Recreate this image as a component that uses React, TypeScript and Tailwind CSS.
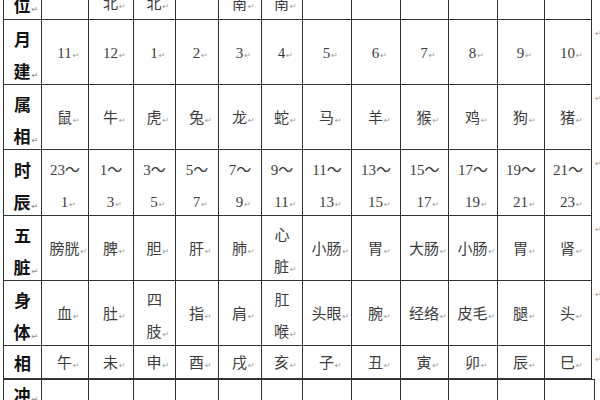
import React from 'react';
import clsx from 'clsx';

type Row = {
  label: string[];
  labelMark?: boolean;
  height: string;
  cells: string[][];
};

// the 方位 row is cut by the top edge: only its last line shows
const topLabel = '位';
const topCells = ['', '北', '北', '', '南', '南', '', '', '', '', '', ''];

const rows: Row[] = [
  {
    label: ['月', '建'],
    labelMark: true,
    height: 'h-[65px]',
    cells: ['11', '12', '1', '2', '3', '4', '5', '6', '7', '8', '9', '10'].map((v) => [v]),
  },
  {
    label: ['属', '相'],
    labelMark: true,
    height: 'h-[65px]',
    cells: ['鼠', '牛', '虎', '兔', '龙', '蛇', '马', '羊', '猴', '鸡', '狗', '猪'].map((v) => [v]),
  },
  {
    label: ['时', '辰'],
    labelMark: true,
    height: 'h-[66px]',
    cells: [
      ['23～', '1'],
      ['1～', '3'],
      ['3～', '5'],
      ['5～', '7'],
      ['7～', '9'],
      ['9～', '11'],
      ['11～', '13'],
      ['13～', '15'],
      ['15～', '17'],
      ['17～', '19'],
      ['19～', '21'],
      ['21～', '23'],
    ],
  },
  {
    label: ['五', '脏'],
    labelMark: true,
    height: 'h-[65px]',
    cells: [['膀胱'], ['脾'], ['胆'], ['肝'], ['肺'], ['心', '脏'], ['小肠'], ['胃'], ['大肠'], ['小肠'], ['胃'], ['肾']],
  },
  {
    label: ['身', '体'],
    labelMark: true,
    height: 'h-[65px]',
    cells: [['血'], ['肚'], ['四', '肢'], ['指'], ['肩'], ['肛', '喉'], ['头眼'], ['腕'], ['经络'], ['皮毛'], ['腿'], ['头']],
  },
  {
    label: ['相'],
    height: 'h-[33px]',
    cells: ['午', '未', '申', '酉', '戌', '亥', '子', '丑', '寅', '卯', '辰', '巳'].map((v) => [v]),
  },
];

const labelFont = "text-[17px] font-bold text-[#111] font-['Noto_Sans_CJK_SC',sans-serif]";
const valueFont = "text-[15px] text-[#3c3c3c] font-['Liberation_Serif','Noto_Sans_CJK_SC',serif]";

// little Word paragraph mark, hangs off the text so centering is untouched
const Mark = () => (
  <span className="inline-block w-0 whitespace-nowrap pl-px text-[8px] leading-none text-[#9a9a9a] font-['DejaVu_Sans',sans-serif]">
    ↵
  </span>
);

const Lines: React.FC<{ lines: string[]; mark: boolean }> = ({ lines, mark }) => (
  <div className="text-center leading-[32px]">
    {lines.map((l, i) => (
      <div key={i} className="whitespace-nowrap">
        {l}
        {mark && i === lines.length - 1 && <Mark />}
      </div>
    ))}
  </div>
);

const App: React.FC = () => {
  return (
    <div className="w-[600px] h-[400px] overflow-hidden bg-white">
      <div className="ml-[3px] grid grid-cols-[39px_47px_45px_42px_43px_43px_41px_49px_49px_48px_49px_47px_47px_9px]">
        <div className={clsx('h-[20px] flex items-end justify-center pb-[5px] border-l border-r border-b border-[#333] leading-[15px]', labelFont)}>
          <span>
            {topLabel}
            <Mark />
          </span>
        </div>
        {topCells.map((c, i) => (
          <div key={i} className={clsx('h-[20px] flex items-end justify-center pb-[7px] border-r border-b border-[#333] leading-[15px]', valueFont)}>
            {c && (
              <span>
                {c}
                <Mark />
              </span>
            )}
          </div>
        ))}
        <div className="h-[20px]" />

        {rows.map((row, r) => (
          <React.Fragment key={r}>
            <div
              className={clsx(
                row.height,
                'flex items-center justify-center border-l border-r border-b border-[#333]',
                row.label.length > 1 ? 'pt-[6px]' : 'pt-[2px]',
                labelFont
              )}
            >
              <Lines lines={row.label} mark={!!row.labelMark} />
            </div>
            {row.cells.map((c, i) => (
              <div
                key={i}
                className={clsx(
                  row.height,
                  'flex items-center justify-center border-r border-b border-[#333]',
                  c.length > 1 ? 'pt-[6px]' : 'pt-[2px]',
                  valueFont
                )}
              >
                <Lines lines={c} mark />
              </div>
            ))}
            <div className={clsx(row.height, 'pt-[9px] pl-[3px] text-[8px] leading-none text-[#9a9a9a]')}>↵</div>
          </React.Fragment>
        ))}
      </div>
      <div className="ml-[3px] grid grid-cols-[39px_47px_45px_42px_43px_43px_41px_49px_49px_48px_49px_47px_50px]">
        <div className={clsx('h-[40px] border-l border-r border-t border-[#333] pt-[5px] text-center leading-[20px]', labelFont)}>
          冲<Mark />
        </div>
        {Array.from({ length: 12 }).map((_, i) => (
          <div key={i} className="h-[40px] border-r border-t border-[#333]" />
        ))}
      </div>
    </div>
  );
};

export default App;
